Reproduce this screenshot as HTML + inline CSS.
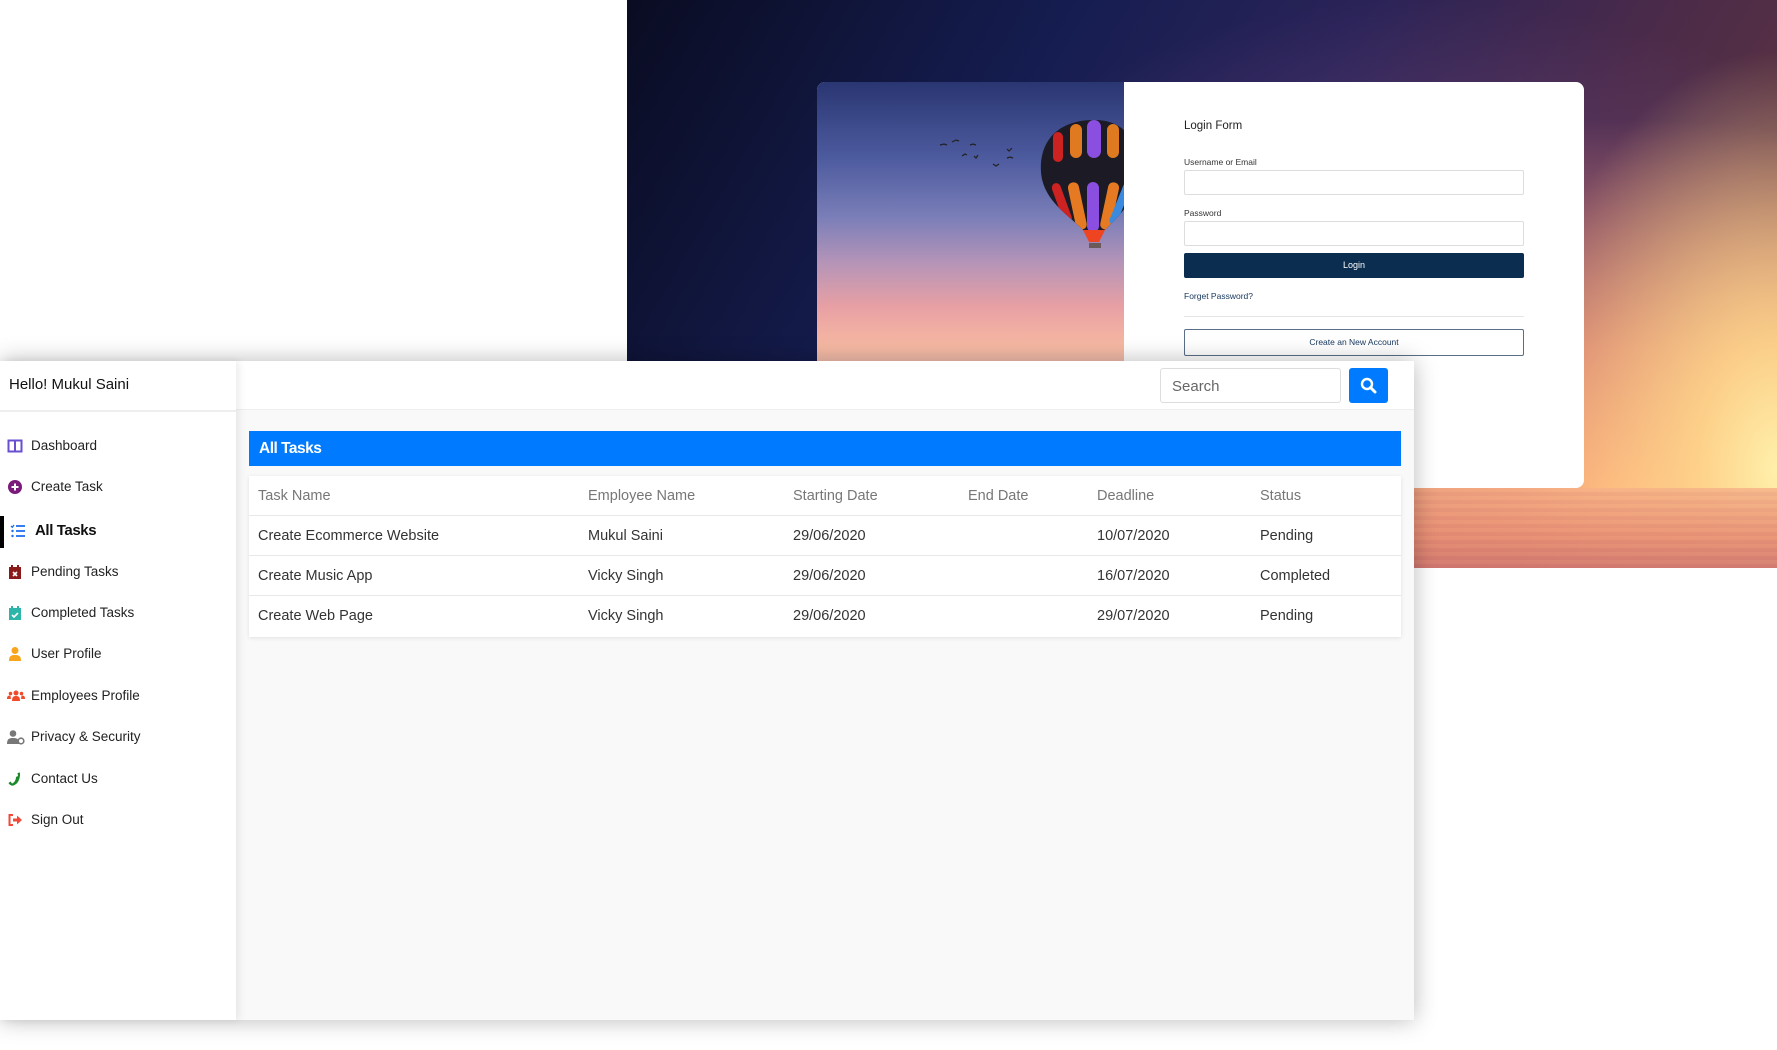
<!DOCTYPE html>
<html><head><meta charset="utf-8">
<style>
*{box-sizing:border-box;margin:0;padding:0}
body{width:1777px;height:1050px;background:#fff;position:relative;overflow:hidden;font-family:"Liberation Sans",sans-serif;color:#222}
.bg{position:absolute;left:627px;top:0;width:1150px;height:568px;
background:
radial-gradient(ellipse 260px 420px at 1150px 470px, rgba(255,240,170,1) 0%, rgba(255,215,140,0.9) 30%, rgba(255,180,120,0) 100%),
radial-gradient(ellipse 700px 380px at 1000px 500px, rgba(255,170,120,1) 0%, rgba(235,140,115,0.85) 40%, rgba(150,80,110,0) 100%),
radial-gradient(ellipse 500px 300px at 800px 300px, rgba(120,80,140,0.6) 0%, rgba(80,50,110,0) 100%),
linear-gradient(120deg,#0a0c22 0%,#151d50 30%,#2a2358 50%,#4a2a4a 70%,#6a3a3a 100%);}
.water{position:absolute;left:627px;top:488px;width:1150px;height:80px;
background:repeating-linear-gradient(180deg,rgba(245,170,130,0.12) 0 4px,rgba(200,110,110,0.12) 4px 8px),linear-gradient(180deg,rgba(245,175,135,0.6),rgba(230,140,115,0.85) 60%,rgba(205,115,110,0.9)),linear-gradient(90deg,rgba(190,100,110,0.6),rgba(240,160,120,0) 60%,rgba(250,190,140,0.5))}
.card{position:absolute;left:817px;top:82px;width:767px;height:406px;background:#fff;border-radius:8px;overflow:hidden}
.pic{position:absolute;left:0;top:0;width:307px;height:300px;background:linear-gradient(180deg,#2a3672 0%,#4c5a9e 25%,#7a7eb8 45%,#b494b8 60%,#e8a0a4 75%,#f6b8a2 88%,#f0c4b8 100%)}
.form{position:absolute;left:367px;top:0;width:340px;font-size:9px;color:#333}
.lbl{position:absolute;left:0}
.inp{position:absolute;left:0;width:340px;height:25px;border:1px solid #ddd;border-radius:2px}
.panel{position:absolute;left:0;top:361px;width:1414px;height:659px;background:#f9f9f9;box-shadow:0 0 22px rgba(0,0,0,0.28)}
.top{position:absolute;left:0;top:0;width:1414px;height:49px;background:#fff;border-bottom:1px solid #eee}
.side{position:absolute;left:0;top:0;width:236px;height:659px;background:#fff;box-shadow:3px 0 8px rgba(0,0,0,0.08)}
.hello{position:absolute;left:9px;top:15px;font-size:15px;color:#111}
.sep{position:absolute;left:0;top:49px;width:236px;height:2px;background:#eee}
.item{position:absolute;left:31px;font-size:13.5px;color:#222}
.ic{position:absolute;left:7px;width:16px;height:16px}
.search{position:absolute;left:1160px;top:7px;width:181px;height:35px;border:1px solid #ddd;border-radius:3px;font-size:15px;color:#666;padding:9px 11px}
.sbtn{position:absolute;left:1349px;top:7px;width:39px;height:35px;background:#007bff;border-radius:3px}
.blue{position:absolute;left:249px;top:70px;width:1152px;height:35px;background:#007bff;color:#fff;font-weight:bold;font-size:15.5px;padding:9px 10px;letter-spacing:-0.5px}
.tbl{position:absolute;left:249px;top:115px;width:1152px;height:161px;background:#fff;box-shadow:0 1px 4px rgba(0,0,0,0.1)}
.row{position:absolute;left:0;width:1152px;height:40px;border-bottom:1px solid #e8e8e8;font-size:14.5px;color:#333}
.row span{position:absolute;top:12px}
.hd{color:#777}
</style></head><body>
<div class="bg"></div>
<div class="water"></div>
<div class="card">
  <div class="pic">
    <svg width="307" height="300" viewBox="0 0 307 300">
      <g stroke="#222" stroke-width="1.2" fill="none">
        <path d="M123 63l4-1 3 1M135 60l4-2 3 1M153 63l3-1 3 1M145 74l3-2 2 1M157 74l2 2 2-3M190 67l2 2 3-3M176 82l3 2 3-2M190 76l3-1 3 1"/>
      </g>
      <defs><clipPath id="env"><path d="M277 38 C 240 38 222 60 224 90 C 226 120 255 135 268 150 L 286 150 C 300 135 320 120 320 90 C 320 60 310 38 277 38Z"/></clipPath></defs>
      <path d="M277 38 C 240 38 222 60 224 90 C 226 120 255 135 268 150 L 286 150 C 300 135 320 120 320 90 C 320 60 310 38 277 38Z" fill="#1c1a24"/>
      <g clip-path="url(#env)">
        <rect x="270" y="38" width="14" height="38" rx="7" fill="#8a4fe0"/>
        <rect x="253" y="42" width="12" height="34" rx="6" fill="#e07a20"/>
        <rect x="236" y="50" width="10" height="30" rx="5" fill="#c22"/>
        <rect x="290" y="42" width="12" height="34" rx="6" fill="#e07a20"/>
        <rect x="270" y="100" width="12" height="50" rx="6" fill="#8a4fe0"/>
        <rect x="254" y="100" width="11" height="48" rx="5" fill="#e67a22" transform="rotate(-12 260 120)"/>
        <rect x="240" y="100" width="9" height="42" rx="5" fill="#c22" transform="rotate(-20 245 120)"/>
        <rect x="288" y="100" width="11" height="48" rx="5" fill="#e67a22" transform="rotate(12 293 120)"/>
        <rect x="300" y="100" width="8" height="44" rx="4" fill="#3a8ae0" transform="rotate(22 304 120)"/>
      </g>
      <path d="M266 148 L288 148 L282 160 L272 160Z" fill="#e42"/>
      <rect x="272" y="161" width="12" height="5" fill="#6a5a5a"/>
    </svg>
  </div>
  <div class="form">
    <div class="lbl" style="top:38px;font-size:11.5px;color:#222">Login Form</div>
    <div class="lbl" style="top:75px;font-size:8.5px">Username or Email</div>
    <div class="inp" style="top:88px"></div>
    <div class="lbl" style="top:126px;font-size:8.5px">Password</div>
    <div class="inp" style="top:139px"></div>
    <div class="inp" style="top:171px;background:#0b2e50;border:none;color:#fff;text-align:center;line-height:25px;font-size:9px">Login</div>
    <div class="lbl" style="top:209px;font-size:8.5px;color:#1a3a60">Forget Password?</div>
    <div style="position:absolute;left:0;top:234px;width:340px;height:1px;background:#e5e5e5"></div>
    <div class="inp" style="top:247px;height:27px;border:1px solid #5a6e88;text-align:center;line-height:25px;font-size:8.5px;color:#1a3a60">Create an New Account</div>
  </div>
</div>

<div class="panel">
  <div class="top"></div>
  <div class="search">Search</div>
  <div class="sbtn"><svg width="39" height="35" viewBox="0 0 39 35"><circle cx="18" cy="16" r="5" stroke="#fff" stroke-width="2.4" fill="none"/><path d="M21.5 19.5l4.5 4.5" stroke="#fff" stroke-width="3" stroke-linecap="round"/></svg></div>
  <div class="blue">All Tasks</div>
  <div class="tbl">
    <div class="row hd" style="top:0"><span style="left:9px">Task Name</span><span style="left:339px">Employee Name</span><span style="left:544px">Starting Date</span><span style="left:719px">End Date</span><span style="left:848px">Deadline</span><span style="left:1011px">Status</span></div>
    <div class="row" style="top:40px"><span style="left:9px">Create Ecommerce Website</span><span style="left:339px">Mukul Saini</span><span style="left:544px">29/06/2020</span><span style="left:848px">10/07/2020</span><span style="left:1011px">Pending</span></div>
    <div class="row" style="top:80px"><span style="left:9px">Create Music App</span><span style="left:339px">Vicky Singh</span><span style="left:544px">29/06/2020</span><span style="left:848px">16/07/2020</span><span style="left:1011px">Completed</span></div>
    <div class="row" style="top:120px;border:none"><span style="left:9px">Create Web Page</span><span style="left:339px">Vicky Singh</span><span style="left:544px">29/06/2020</span><span style="left:848px">29/07/2020</span><span style="left:1011px">Pending</span></div>
  </div>
  <div class="side">
    <div class="hello">Hello! Mukul Saini</div>
    <div class="sep"></div>
    <svg class="ic" style="top:77px" viewBox="0 0 16 16"><rect x="1.5" y="2.5" width="13" height="11" fill="none" stroke="#6a4fd0" stroke-width="2"/><path d="M8 3v10" stroke="#6a4fd0" stroke-width="2"/></svg>
    <div class="item" style="top:77px">Dashboard</div>
    <svg class="ic" style="top:118px" viewBox="0 0 16 16"><circle cx="8" cy="8" r="7" fill="#7a1a7a"/><path d="M8 4.5v7M4.5 8h7" stroke="#fff" stroke-width="2"/></svg>
    <div class="item" style="top:118px">Create Task</div>
    <div style="position:absolute;left:0;top:155px;width:4px;height:32px;background:#000"></div>
    <svg class="ic" style="top:162px;left:10px" viewBox="0 0 16 16"><path d="M6 3h9M6 8h9M6 13h9" stroke="#1a6cf0" stroke-width="1.8"/><path d="M1 3l1.3 1.3L4 2" stroke="#1a6cf0" stroke-width="1.3" fill="none"/><circle cx="2.5" cy="8" r="1.2" fill="#1a6cf0"/><circle cx="2.5" cy="13" r="1.2" fill="#1a6cf0"/></svg>
    <div class="item" style="top:161px;left:35px;font-weight:bold;font-size:15px;color:#111;letter-spacing:-0.4px">All Tasks</div>
    <svg class="ic" style="top:203px" viewBox="0 0 16 16"><rect x="2" y="3" width="12" height="12" fill="#8a1a1a"/><path d="M5 1v3M11 1v3" stroke="#8a1a1a" stroke-width="2"/><path d="M6 8l4 4M10 8l-4 4" stroke="#fff" stroke-width="1.6"/></svg>
    <div class="item" style="top:203px">Pending Tasks</div>
    <svg class="ic" style="top:244px" viewBox="0 0 16 16"><rect x="2" y="3" width="12" height="12" fill="#2cb5a8"/><path d="M5 1v3M11 1v3" stroke="#2cb5a8" stroke-width="2"/><path d="M5 10l2 2 4-4" stroke="#fff" stroke-width="1.6" fill="none"/></svg>
    <div class="item" style="top:244px">Completed Tasks</div>
    <svg class="ic" style="top:285px" viewBox="0 0 16 16"><circle cx="8" cy="4.5" r="3.5" fill="#f7a51c"/><path d="M2 15c0-5 2-6 6-6s6 1 6 6z" fill="#f7a51c"/></svg>
    <div class="item" style="top:285px">User Profile</div>
    <svg class="ic" style="top:327px;width:18px" viewBox="0 0 18 16"><circle cx="9" cy="5" r="2.5" fill="#f04a2a"/><circle cx="3.5" cy="5.5" r="1.8" fill="#f04a2a"/><circle cx="14.5" cy="5.5" r="1.8" fill="#f04a2a"/><path d="M5 13c0-4 1.5-5 4-5s4 1 4 5z" fill="#f04a2a"/><path d="M0 11c0-3 1-3.5 3.5-3.5L4 11zM18 11c0-3-1-3.5-3.5-3.5L14 11z" fill="#f04a2a"/></svg>
    <div class="item" style="top:327px">Employees Profile</div>
    <svg class="ic" style="top:368px;width:18px" viewBox="0 0 18 16"><circle cx="6" cy="4.5" r="3.3" fill="#777"/><path d="M0 15c0-5 2-6 6-6s5 1 6 3v3z" fill="#777"/><circle cx="14" cy="12" r="2.8" fill="none" stroke="#777" stroke-width="1.6"/></svg>
    <div class="item" style="top:368px">Privacy &amp; Security</div>
    <svg class="ic" style="top:410px" viewBox="0 0 16 16"><path d="M13 1.5l-2.5 .5 .5 3-2 1c0 3-2 6-4 6.5l-1.5-2L1.5 12c1 2 3 3 5 2.5 4-1.5 7-6 6.5-13z" fill="#1a8a2a"/></svg>
    <div class="item" style="top:410px">Contact Us</div>
    <svg class="ic" style="top:451px" viewBox="0 0 16 16"><path d="M6 3H2.5v10H6" stroke="#f04a3a" stroke-width="2" fill="none"/><path d="M6 6.5h4V3.5l5 4.5-5 4.5V9.5H6z" fill="#f04a3a"/></svg>
    <div class="item" style="top:451px">Sign Out</div>
  </div>
</div>
</body></html>
